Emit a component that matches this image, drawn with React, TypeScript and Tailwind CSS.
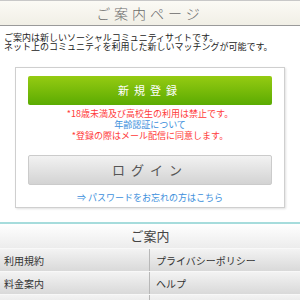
const font = { fontFamily: '"Noto Sans CJK JP", "Noto Sans", sans-serif' };

const links: [string, string][] = [
  ["利用規約", "プライバシーポリシー"],
  ["料金案内", "ヘルプ"],
  ["運営会社", "お問い合わせ"],
];

export default function App() {
  return (
    <div className="w-[300px] h-[300px] overflow-hidden bg-white" style={font}>
      {/* Page title */}
      <div className="h-[26px] border-t border-[#c8c8c8] border-b border-b-[#9a9a9a] bg-gradient-to-b from-[#fbfaf5] to-[#f1efe6] flex items-center justify-center">
        <span className="text-[14px] text-[#6a6a6a] tracking-[4px] font-light">ご案内ページ</span>
      </div>

      <p className="pt-[7px] px-[4px] text-[9px] leading-[9px] text-[#222]">
        ご案内は新しいソーシャルコミュニティサイトです。
        <br />
        ネット上のコミュニティを利用した新しいマッチングが可能です。
      </p>

      {/* Entry card */}
      <div className="mx-[15px] mt-[16px] border border-[#cfcfcf] shadow-[1px_1px_2px_rgba(0,0,0,0.12)] px-[12px] pt-[8px] pb-[4px]">
        <button className="w-full h-[29px] rounded-[2px] bg-gradient-to-b from-[#95cb12] to-[#5aab02] text-white text-[11px] tracking-[5px] flex items-center justify-center">
          新規登録
        </button>
        <div className="mt-[3px] text-center text-[9px] leading-[11px]">
          <div className="text-[#ff3a3a]">*18歳未満及び高校生の利用は禁止です。</div>
          <div className="text-[#3d8fdc]">年齢認証について</div>
          <div className="text-[#ff3a3a]">*登録の際はメール配信に同意します。</div>
        </div>
        <button className="mt-[14px] w-full h-[30px] rounded-[2px] border border-[#cbcbcb] bg-gradient-to-b from-[#f2f2f2] to-[#d3d3d3] text-[#555] text-[13px] tracking-[6px] flex items-center justify-center">
          ログイン
        </button>
        <div className="mt-[7px] text-center text-[9px] leading-[11px] text-[#3d8fdc]">
          ⇒ パスワードをお忘れの方はこちら
        </div>
      </div>

      {/* Guide section */}
      <div className="mt-[14px] border-t-2 border-[#a6dcdc]">
        <div className="h-[24px] bg-gradient-to-b from-white to-[#ececec] flex items-center justify-center text-[13px] text-[#444]">
          ご案内
        </div>
        {links.map(([a, b]) => (
          <div key={a} className="grid grid-cols-2 h-[23px] border-t border-[#f8f8f8] bg-gradient-to-b from-[#f3f3f3] to-[#d9d9d9] text-[10px] text-[#333]">
            <div className="flex items-center pl-[4px] border-r border-[#b8b8b8]">{a}</div>
            <div className="flex items-center pl-[6px]">{b}</div>
          </div>
        ))}
      </div>
    </div>
  );
}
